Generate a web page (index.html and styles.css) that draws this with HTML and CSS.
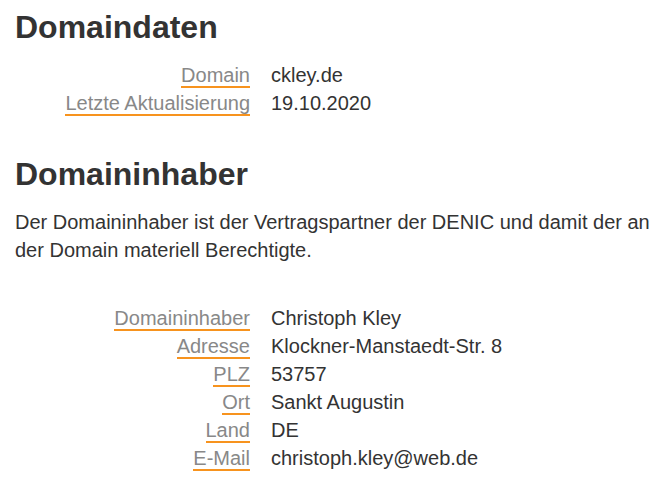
FILE: index.html
```html
<html>
<head>
	<title>Domaindaten</title>
	<link rel="stylesheet" href="styles.css">
</head>

<body>

<div class='page'>
	<h1>Domaindaten</h1>
	<dl class='facts facts-top'>
		<dt><span class='lbl'>Domain</span></dt>
		<dd>ckley.de</dd>
		<dt><span class='lbl'>Letzte Aktualisierung</span></dt>
		<dd>19.10.2020</dd>
	</dl>

	<h1>Domaininhaber</h1>
	<p class='intro'>Der Domaininhaber ist der Vertragspartner der DENIC und damit der an der Domain materiell Berechtigte.</p>

	<dl class='facts'>
		<dt><span class='lbl'>Domaininhaber</span></dt>
		<dd>Christoph Kley</dd>
		<dt><span class='lbl'>Adresse</span></dt>
		<dd>Klockner-Manstaedt-Str. 8</dd>
		<dt><span class='lbl'>PLZ</span></dt>
		<dd>53757</dd>
		<dt><span class='lbl'>Ort</span></dt>
		<dd>Sankt Augustin</dd>
		<dt><span class='lbl'>Land</span></dt>
		<dd>DE</dd>
		<dt><span class='lbl'>E-Mail</span></dt>
		<dd>christoph.kley@web.de</dd>
	</dl>
</div>

</body>
</html>
```

FILE: styles.css
```css
body{
	margin:0;
	background-color:#fff;
	color:#333;
	font-family:"Liberation Sans", Arial, sans-serif;
	font-size:20px;
	line-height:28px;
}
.page{
	padding:8px 6px 0 15px;
}
h1{
	font-size:32px;
	line-height:38px;
	font-weight:bold;
	margin:0 0 15px 0;
	color:#333;
}
.facts{
	display:grid;
	grid-template-columns:235px 1fr;
	column-gap:21px;
	margin:0;
}
.facts-top{
	margin-bottom:38px;
}
dt{
	text-align:right;
}
dd{
	margin:0;
}
.lbl{
	color:#888;
	border-bottom:2px solid #f7931e;
}
.intro{
	margin:1px 0 40px 0;
}
```
